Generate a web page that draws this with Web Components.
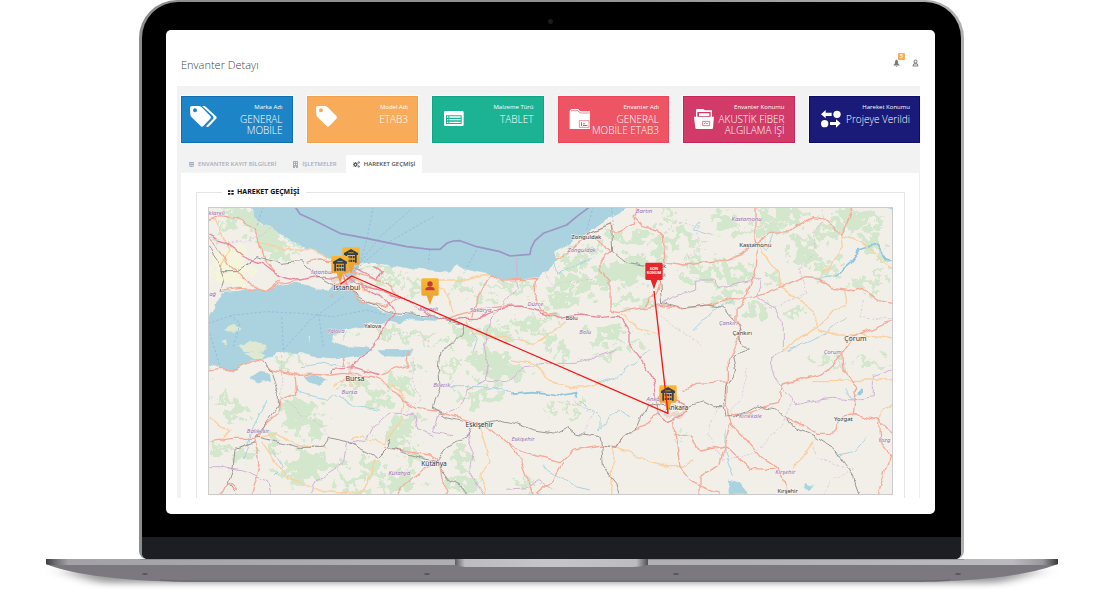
<!DOCTYPE html>
<html lang="tr">
<head>
<meta charset="utf-8">
<meta name="viewport" content="width=device-width, initial-scale=1">
<title>Envanter Detayı</title>
<style>
  body { margin: 0; background: #fff; font-family: "Open Sans", "Noto Sans", sans-serif; }
</style>
</head>
<body>
<laptop-frame>
  <app-header heading="Envanter Detayı" count="5"></app-header>
  <app-body>
    <stat-card slot="cards" color="#1d84c7" edge="#0f6fb4" icon="tags" label="Marka Adı">GENERAL<br>MOBİLE</stat-card>
    <stat-card slot="cards" color="#f8ac59" edge="#f3a14a" icon="tag" label="Model Adı">ETAB3</stat-card>
    <stat-card slot="cards" color="#1cb394" edge="#0ea583" icon="list" label="Malzeme Türü">TABLET</stat-card>
    <stat-card slot="cards" color="#ed5565" edge="#ee4358" icon="folder" label="Envanter Adı">GENERAL<br>MOBİLE ETAB3</stat-card>
    <stat-card slot="cards" color="#d23a68" edge="#cb2257" icon="open" label="Envanter Konumu">AKUSTİK FİBER<br>ALGILAMA İŞİ</stat-card>
    <stat-card slot="cards" color="#1a1a78" edge="#0c0c68" icon="move" label="Hareket Konumu">Projeye Verildi</stat-card>
    <tab-strip slot="tabs"></tab-strip>
    <history-panel slot="panel"><route-map></route-map></history-panel>
  </app-body>
</laptop-frame>

<script>
const define = (name, render) => customElements.define(name, class extends HTMLElement {
  connectedCallback() {
    if (!this.shadowRoot) this.attachShadow({ mode: "open" }).innerHTML = render(this);
  }
});

/* ---------- laptop ---------- */
define("laptop-frame", () => `
<style>
  :host { display: block; }
  .lid { margin: 0 136px 0 139px; box-sizing: border-box; padding: 2px 3px 0; border-radius: 38px 38px 8px 8px;
    background: linear-gradient(90deg, #8b8e8e, #8f9090 50%, #b0b0b1); }
  .glass { background: #000; border-radius: 36px 36px 6px 6px; padding-top: 28px; position: relative; overflow: hidden; }
  .camera { position: absolute; top: 17px; left: 50%; width: 5px; height: 5px; margin-left: -4px; border-radius: 50%; background: #1b1b1d; }
  .screen { margin: 0 26px 0 24px; background: #fff; border-radius: 5px; padding-bottom: 16px; overflow: hidden; }
  .chin { margin-top: 23px; height: 22px; background: #1d1e23; }
  .base { display: block; width: 100%; height: 35px; }
</style>
<div class="lid"><div class="glass">
  <div class="camera"></div>
  <div class="screen"><slot></slot></div>
  <div class="chin"></div>
</div></div>
<svg class="base" viewBox="0 559 1100 35" preserveAspectRatio="none" aria-hidden="true">
  <defs>
    <linearGradient id="rim"><stop offset="0" stop-color="#3f3f41"/><stop offset=".008" stop-color="#68686a"/><stop offset=".022" stop-color="#a2a1a5"/><stop offset=".3" stop-color="#adacb1"/><stop offset=".7" stop-color="#b2b1b6"/><stop offset=".955" stop-color="#bbbabf"/><stop offset=".985" stop-color="#98979b"/><stop offset="1" stop-color="#39393b"/></linearGradient>
    <linearGradient id="lip"><stop offset="0" stop-color="#5c5c60"/><stop offset=".05" stop-color="#bcbbc0"/><stop offset=".5" stop-color="#c6c5ca"/><stop offset=".94" stop-color="#bcbbc0"/><stop offset="1" stop-color="#505054"/></linearGradient>
    <filter id="soft" x="-5%" y="-100%" width="110%" height="300%"><feGaussianBlur stdDeviation="10 3"/></filter>
  </defs>
  <path d="M60 570H1044L1000 583H100Z" fill="#777" opacity=".75" filter="url(#soft)"/>
  <path d="M46 564H1058C1040 571 1000 581 920 582H190C110 581 64 572 46 564Z" fill="#7b7880"/>
  <path d="M160 580Q175 581 190 581H920Q935 581 950 580" fill="none" stroke="#68666c" stroke-width="1"/>
  <path d="M46 559H1058V564Q1056 565 1052 565H52Q47 565 46 564Z" fill="url(#rim)"/>
  <path d="M140 559H964" stroke="#77777b" stroke-width="1"/>
  <path d="M455 559H648V565Q640 567 632 567H471Q460 567 455 565Z" fill="url(#lip)"/>
  <g fill="#55545a"><ellipse cx="145" cy="574" rx="3" ry="1"/><ellipse cx="427" cy="574" rx="3" ry="1"/><ellipse cx="676" cy="574" rx="3" ry="1"/><ellipse cx="958" cy="574" rx="3" ry="1"/></g>
</svg>`);

/* ---------- header ---------- */
define("app-header", el => `
<style>
  :host { display: flex; justify-content: space-between; align-items: center; box-sizing: border-box; height: 56px; padding: 13px 16px 0 15px; color: #676a6c; }
  h1 { margin: 0; font-size: 11px; line-height: 16px; font-weight: 300; color: #444; }
  nav { display: flex; gap: 12px; align-items: center; }
  button { all: unset; position: relative; display: block; width: 7px; height: 8px; cursor: pointer; }
  svg { display: block; width: 7px; height: 8px; }
  button > svg { position: absolute; inset: -2px 0 auto 0; }
  .badge { position: absolute; left: 4px; top: -10px; width: 7px; height: 8px; border-radius: 1px; background: #f8ac59; color: #fff; font: 700 5px/8px "Open Sans", sans-serif; text-align: center; }
  nav { padding-top: 0; }
  .badge { top: -6px; height: 7px; line-height: 7px; left: 5px; }
  button > svg { top: 0; }
  nav { margin-top: -4px; }
</style>
<h1>${el.getAttribute("heading")}</h1>
<nav>
  <button aria-label="Bildirimler"><svg viewBox="0 0 14 16" fill="#767a7d"><path d="M7 1Q10 2 10 6Q10 11 13 12V13H1V12Q4 11 4 6Q4 2 7 1ZM5 14H9Q7 17 5 14Z"/></svg><span class="badge">${el.getAttribute("count")}</span></button>
  <button aria-label="Kullanıcı"><svg viewBox="0 0 14 16" fill="#84878a"><path fill-rule="evenodd" d="M7 1Q11 1 11 5Q11 8 9 8Q13 9 13 15H1Q1 9 5 8Q3 8 3 5Q3 1 7 1ZM7 3Q5 3 5 5Q6 7 7 7Q9 7 9 5Q9 3 7 3ZM4 11V13H10V11Z"/></svg></button>
</nav>`);

define("app-body", () => `
<style>
  :host { display: block; margin: 0 15px 0 11px; padding: 10px 0 0 4px; background: #f2f2f2; }
  .cards { display: grid; grid-template-columns: repeat(6, minmax(0, 1fr)); gap: 14px; margin-bottom: 12px; }
</style>
<div class="cards"><slot name="cards"></slot></div>
<slot name="tabs"></slot>
<slot name="panel"></slot>`);

/* ---------- cards ---------- */
const cardIcons = {
  tags: `<path fill-rule="evenodd" d="M0 12Q0 6 6 6H25Q31 6 35 10L61 36Q65 40 61 44L40 66Q36 70 32 66L5 40Q2 37 1 32ZM15 13A6 6 0 1 0 15 25A6 6 0 1 0 15 13Z"/><path d="M36 6H40Q45 6 49 10L77 36Q83 41 77 46L57 67Q53 71 48 67L69 45Q73 40 68 35Z"/>`,
  tag: `<path fill-rule="evenodd" d="M0 12Q0 6 6 6H25Q31 6 35 10L61 36Q65 40 61 44L40 66Q36 70 32 66L5 40Q2 37 1 32ZM15 13A6 6 0 1 0 15 25A6 6 0 1 0 15 13Z"/>`,
  list: `<path fill-rule="evenodd" d="M13 21H64Q68 21 68 25V62Q68 66 64 66H13Q9 66 9 62V25Q9 21 13 21ZM15 34V60H62V34Z"/><path d="M18 37h4v4h-4zM25 37h34v4H25zM18 45h4v4h-4zM25 45h34v4H25zM18 53h4v4h-4zM25 53h34v4H25z"/>`,
  folder: `<path d="M8 20L14 15H34L40 22H69V75H8Z"/><path d="M12 20H33L39 27H69" fill="none" stroke="#ed5565" stroke-width="2"/><path d="M37 50H66V70H37Z" fill="none" stroke="#ed5565" stroke-width="2"/><path d="M42 55h3v11h-3zM48 58h6v3h-6zM48 63h13v3H48z" fill="#ed5565"/>`,
  open: `<path fill-rule="evenodd" d="M14 15H34L39 19H60V38H66L63 72Q63 75 59 75H14Q10 75 10 72L6 38H12V19ZM16 24V38H56V24Z"/><path d="M21 28H52V36H21Z"/><path d="M32 52H53V65H32ZM36 60L41 56 45 60 49 57" fill="none" stroke="#d23a68" stroke-width="2"/>`,
  move: `<path d="M9 31L23 18V26H41V36H23V43ZM68 58L54 46V54H36V63H54V71Z"/><circle cx="57" cy="31" r="11"/><circle cx="20" cy="59" r="11"/>`
};
define("stat-card", el => `
<style>
  :host { display: flex; box-sizing: border-box; min-width: 0; height: 47px; padding: 6px 9px 0 8px; border: 1px solid ${el.getAttribute("edge")}; background: ${el.getAttribute("color")}; box-shadow: 0 0 0 1px #fafafa; color: #fff; }
  svg { flex: none; width: 28px; height: 28px; margin: 1px -10px 0 0; fill: #fff; }
  div { flex: 1; text-align: right; white-space: nowrap; }
  small { display: block; font-size: 6px; line-height: 9px; font-weight: 500; margin-bottom: 2px; }
  strong { display: block; font-size: 10px; line-height: 11px; font-weight: 300; }
</style>
<svg viewBox="0 0 84 84" aria-hidden="true">${cardIcons[el.getAttribute("icon")]}</svg>
<div><small>${el.getAttribute("label")}</small><strong><slot></slot></strong></div>`);

/* ---------- tabs ---------- */
define("tab-strip", () => `
<style>
  :host { display: flex; gap: 2px; height: 18px; }
  button { all: unset; box-sizing: border-box; display: flex; align-items: center; gap: 3px; padding: 0 7px; font-size: 6px; line-height: 10px; font-weight: 600; color: #a3aec0; white-space: nowrap; cursor: pointer; }
  button[aria-selected="true"] { gap: 4px; background: #fff; color: #4c4f55; border-radius: 1px 1px 0 0; }
  svg { width: 7px; height: 7px; fill: currentColor; }
</style>
<button role="tab" aria-selected="false"><svg viewBox="0 0 14 14"><path d="M2 2H12V5H2ZM2 6H12V8H2ZM2 9H12V11H9V12H5V11H2Z"/></svg>ENVANTER KAYIT BİLGİLERİ</button>
<button role="tab" aria-selected="false"><svg viewBox="0 0 14 14"><path fill-rule="evenodd" d="M2 0H12V14H8V11H6V14H2ZM4 2V4H6V2ZM8 2V4H10V2ZM4 6V8H6V6ZM8 6V8H10V6Z"/></svg>İŞLETMELER</button>
<button role="tab" aria-selected="true"><svg viewBox="0 0 14 14"><g fill="none" stroke="currentColor"><circle cx="5" cy="7" r="3" stroke-width="2.5"/><circle cx="11.500" cy="3" r="1.500" stroke-width="1.500"/><circle cx="11.500" cy="11" r="1.500" stroke-width="1.500"/><path d="M5 2V4M5 10V12M0 7H2M1 3L3 5M1 11L3 9" stroke-width="1.500"/></g></svg>HAREKET GEÇMİŞİ</button>`);

define("history-panel", () => `
<style>
  :host { display: block; background: #fff; padding: 14px 14px 0; border: solid #eee; border-width: 0 1px 0 0; }
  fieldset { min-width: 0; margin: 0 0 0 1px; padding: 10px 11px 3px; border: 1px solid #e5e5e5; border-bottom: 0; }
  legend { display: flex; align-items: center; gap: 3px; margin-left: 14px; padding: 0 6px; font-size: 7px; line-height: 10px; font-weight: 700; color: #111; font-family: "Noto Sans", "Open Sans", sans-serif; }
  svg { width: 6px; height: 5px; }
</style>
<fieldset>
  <legend><svg viewBox="0 0 18 15" aria-hidden="true"><path d="M0 1H7V6H0ZM10 1H17V6H10ZM0 9H7V14H0ZM10 9H17V14H10Z" fill="#111"/></svg>HAREKET GEÇMİŞİ</legend>
  <slot></slot>
</fieldset>`);

/* ---------- map ---------- */
const woods = [
  [130,45,50,28],[180,72,52,26],[215,125,40,44],[250,165,38,20],[95,70,40,10],[50,100,14,10],[520,205,60,12],[560,240,36,10],[605,215,26,8],[640,262,40,10],[440,412,40,10],[600,400,60,12],[680,412,44,16],[300,135,22,10],
  [790,265,26,18],[840,300,40,16],[890,252,50,8],[960,268,50,12],[1130,250,88,26],[1110,180,50,22],[1190,140,30,16],[1290,110,64,20],[1250,220,70,36],[1320,200,46,36],[1290,300,54,16],[1090,300,60,16],[890,395,40,20],[790,405,44,20],[980,370,60,16],[1020,412,46,16],[1040,345,36,9],[1220,410,54,18],[1310,420,28,12],[1380,160,26,26],
  [1440,110,58,20],[1410,55,28,14],[1570,60,40,20],[1620,95,28,14],[1750,45,78,24],[1710,90,60,20],[1810,150,50,34],[1890,90,40,20],[1980,60,58,28],[1940,40,34,14],[2020,130,38,38],[1880,205,50,24],[1530,220,78,22],[1620,220,40,20],[1580,290,50,14],[1490,180,40,14],[1670,320,30,20],[1780,335,30,14],[1990,250,50,12],[2050,220,28,14],[1720,240,18,18],
  [275,480,46,12],[290,640,56,46],[340,680,36,38],[340,790,80,32],[290,820,50,24],[480,560,50,18],[590,550,50,24],[540,590,40,18],[590,710,50,28],[620,670,40,18],[520,800,40,28],[600,850,58,24],[450,850,50,18],[640,780,32,28],[60,600,26,16],[110,630,24,34],[50,750,28,12],[130,770,36,18],[225,735,22,26],[60,510,20,8],[650,510,26,12],
  [750,500,36,10],[870,490,58,38],[920,520,48,26],[860,600,48,24],[800,580,28,14],[1110,630,32,12],[1050,628,20,10],[970,510,38,12],[780,770,24,38],[790,850,46,28],[1090,465,28,12],[1220,460,32,12],[970,850,32,10],
  [1870,480,34,12],[2020,490,54,12],[1920,500,20,8],[1448,704,10,4]
].map(([x, y, a, b]) => `<ellipse cx="${x}" cy="${y}" rx="${a}" ry="${b}"/>`).join("");

const roads = ["25 120 60 150 90 200 140 240 190 275 240 240","60 275 120 265 195 272 240 250 300 240","25 60 60 50 120 60 160 85 180 130 195 180 235 225",
  "815 350 835 290 850 260 870 225 910 240 980 238 1010 235 1005 290 1025 330 1070 345","740 355 790 340 860 325 940 315",
  "1065 175 1100 160 1130 130 1160 105 1200 130 1235 155 1200 190 1200 205 1230 240 1230 330 1265 335","1160 105 1230 75 1245 100 1300 70 1300 50 1315 20","1300 50 1330 80 1370 90 1390 110 1395 190 1365 280 1330 320",
  "1395 185 1450 195 1560 185 1620 165 1670 130 1710 100 1760 98 1800 75 1840 50 1880 55 1910 90 1925 100 1945 60 1960 20","1665 20 1665 120 1670 140 1665 210 1650 250 1635 295",
  "1265 335 1380 315 1440 328 1520 315 1590 295 1640 298 1700 280 1760 255 1820 230 1860 235 1900 268 1950 275 1990 265 2040 300 2078 308",
  "1640 298 1605 330 1605 360 1625 400 1600 455 1585 480 1585 560 1580 640 1590 670 1575 740 1560 790 1500 830 1500 884",
  "1450 570 1490 550 1585 545","1590 645 1640 640 1700 620 1735 610 1750 555 1800 540 1870 520 1920 470 1930 450","2078 360 2000 395 1960 410 1925 460 1930 510 1970 560 1960 640 2030 660 2078 700",
  "1760 655 1850 700 1890 700 1930 650 1970 640","2035 660 2040 720 2070 765 2050 830 2035 884","1590 670 1640 720 1680 770 1730 800 1750 830 1760 884","1575 735 1650 805 1730 810",
  "1420 660 1425 700 1440 800 1480 850 1560 880","1420 700 1470 710 1500 750 1575 735",
  "1375 640 1340 670 1300 690 1270 710 1250 740 1200 735 1120 750 1090 780 1080 785 1000 765 935 738 870 685 830 665 740 640 700 630","935 738 960 780 1000 884","1090 785 1060 840 1010 884",
  "25 510 60 505 110 510 150 490 180 478 210 510 240 515 285 522 390 525 430 520 520 530 545 540 580 570 615 605 650 625 720 635","285 522 290 580 240 600 235 640 190 680 165 715 100 715 25 725","165 720 175 760 180 800 155 884",
  "550 745 620 755 690 765 710 780 640 830 590 884","720 790 740 884","435 500 430 470","545 525 600 505 620 500 625 450","400 255 430 250 480 300 560 320 600 290 560 250 500 230 450 215","320 190 350 180 400 182","55 884 90 850 110 870"];
const minor = ["165 715 230 700 290 740 380 745","450 720 490 705 550 735 600 660 615 600 580 550","185 725 230 790 260 830 350 870 480 880 510 830 525 780","835 670 860 740 870 790 845 820 855 884","930 480 1000 490 1050 540 1130 565 1200 550","1250 740 1340 780 1400 800 1450 800 1480 780","1240 740 1235 884",
  "1670 130 1710 190 1735 220 1735 260 1800 300 1840 340 1860 390 1910 405 1990 405 2078 420","1925 100 1930 140 1900 180 1860 230","1925 105 1990 125 2030 170 2078 205","1860 380 1800 410 1750 450","1840 545 1900 545 2000 540 2078 540","1850 710 1820 760 1780 800","2078 605 2050 625 2035 660",
  "800 360 820 400 900 410 1000 430 1060 390 1100 360","1265 340 1310 380 1370 400","690 240 740 240 800 240 860 225","760 340 735 270 690 240","1930 270 1940 320 1900 330 1860 380","25 650 60 680 90 690 60 720","45 50 70 110 90 150 60 200","180 130 260 150 330 145 380 175","400 560 440 530 480 560","430 240 470 230 490 270 520 260"];
const rails = ["25 140 60 190 60 215 110 215 170 170 240 190 300 185 340 220 390 250 440 265 500 300 560 335 620 342 700 345 745 360 790 370 790 400 760 430 720 450 715 500 720 560 705 600 700 625 740 650 830 670 900 660 960 675 1000 690 1070 700 1105 680 1130 700 1200 710 1205 735 1250 742 1270 710 1310 680 1340 610 1400 620 1465 620 1510 605 1540 620 1570 620 1575 650 1600 650 1640 635 1670 618 1730 630 1760 660 1800 690 1845 710 1900 745 1930 790 1960 830 1980 884",
  "60 215 70 240 60 275","1205 735 1210 800 1250 850 1260 884","1160 105 1235 73 1238 155 1280 190 1340 200 1380 250 1385 310 1440 325 1520 315 1570 322 1590 350 1620 380 1625 430 1645 450 1600 465 1610 510 1580 560 1575 620",
  "180 478 215 520 235 580 235 620 190 680 165 710 230 725 290 745 370 745 385 712 440 725 520 765 530 775 565 740 565 720","165 725 105 745 100 800 85 850 110 884","565 745 690 780 710 785 750 840 790 860 800 884","700 790 740 740 800 710 810 680"];
const borders = ["945 170 950 240 955 265 930 290 900 330 870 360 850 440 860 500 860 540 800 570 780 620 720 640 700 700 760 710","1380 315 1420 290 1490 270 1490 240 1540 240 1560 265 1610 250 1685 235 1670 290 1720 320 1750 370 1750 450 1715 470 1715 510 1740 560 1790 615 1850 600 1900 595 1960 600 2020 590 2020 530 2078 510",
  "25 800 70 800 130 810 200 840 215 884","330 884 355 840 430 790 440 730 500 720 520 680 570 640 640 640 650 690 700 710","800 700 820 760 810 820 850 884","860 540 920 545 970 500 1060 490 1130 490 1250 450","925 865 980 860 1020 845 1060 870"];
const dashes = ["1440 70 1490 80 1500 140 1450 190","1860 20 1870 60 1840 100 1850 150 1800 200 1820 280 1700 330","1990 300 1980 350 2078 360","1380 345 1450 400 1500 430","1560 620 1520 700 1570 780 1660 760 1740 680 1780 600","245 470 245 600 300 640 375 680 385 710","1840 730 1850 770 1920 800 1960 810","1005 165 1040 230 1060 255 1140 245 1190 230","640 470 640 540 660 600 620 630","25 115 90 130 180 110 240 60 285 20","1870 884 1890 840 1960 810","1200 710 1150 700 1180 640 1120 600","560 410 620 395 690 430","1640 500 1620 600 1590 640"];
const ferries = ["520 20 500 120 480 190","460 215 540 110 620 40 640 20","460 215 560 130 700 50","25 370 100 345 200 335 300 340 400 350 500 330 560 345","370 440 355 340","250 450 245 350","100 440 120 370 90 345","430 290 330 360 250 450","690 148 685 190","1235 20 1240 75","830 150 790 220","1180 20 1160 90","190 20 170 80","30 400 60 500"];
const rivers = ["285 560 330 590 380 600 400 580 470 620 540 630","200 600 160 680 130 780","220 750 250 800 220 830","750 560 860 560 930 575","1030 800 1080 830 1120 860 1170 870","1130 590 1160 620 1200 650 1200 690 1250 630 1290 650","1820 230 1860 232 1910 225","1760 450 1830 420 1880 400 1940 350","1575 690 1575 760 1600 830","1910 765 1960 755 2000 710","1480 390 1540 330 1600 300","1720 100 1700 150 1680 130","800 370 830 420 820 450","1050 170 1080 220 1180 170","1190 550 1250 530 1350 450","300 500 380 490 440 500","1980 570 1960 600 1940 570","1500 60 1480 90 1540 110"];
const motorways = ["25 105 80 130 130 165 190 190 235 225 300 240 350 230 400 235 430 215 470 250 520 280 560 300 585 335 560 370 520 440 480 470 455 510","470 250 540 270 620 300 690 345 740 360 800 355 840 355 920 320 960 318 1020 335 1080 355 1140 345 1200 352 1260 348 1270 370 1290 400 1290 430 1320 470 1350 520 1365 560 1370 600","1370 600 1400 585 1450 610 1465 625 1440 650 1400 665 1375 640 1370 600","390 520 400 508 470 503 540 525","440 270 430 220 465 205 530 240 550 215 520 200"];
const lines = list => list.map(p => `<polyline points="${p}"/>`).join("");
const text = (x, y, size, s) => `<text x="${x}" y="${y}" font-size="${size}">${s}</text>`;
const regions = [[50,46,"klareli"],[366,222,"İstanbul"],[408,400,"Yalova"],[686,332,"Kocaeli"],[842,337,"Sakarya"],[1006,318,"Düzce"],[1145,157,"Zonguldak"],[1156,403,"Bolu"],[1332,39,"Bartın"],[1640,63,"Kastamonu"],[1585,374,"Çankırı"],[1898,461,"Çorum"],[448,581,"Bursa"],[174,698,"Balıkesir"],[598,825,"Kütahya"],[725,562,"Bilecik"],[969,722,"Eskişehir"],[1368,603,"Ankara"],[1651,653,"Kırıkkale"],[1756,822,"Kırşehir"],[2053,726,"Yozg"],[38,287,"ağ"],[1388,230,"ük"]];
const cities = [[440,269,21,"İstanbul"],[518,385,17,"Yalova"],[1159,116,18,"Zonguldak"],[1115,360,17,"Bolu"],[1666,141,18,"Kastamonu"],[1627,406,18,"Çankırı"],[1966,424,21,"Çorum"],[465,543,21,"Bursa"],[702,797,20,"Kütahya"],[838,681,20,"Eskişehir"],[1432,630,20,"Ankara"],[1930,663,18,"Yozgat"],[1763,880,17,"Kırşehir"],[1388,203,17,"ük"]];
const pin = (x, y, fill, art) => `<g transform="translate(${x} ${y})"><path d="M-22-80H22Q26-80 26-76V-32Q26-28 22-28H10L0 0L-10-28H-22Q-26-28-26-32V-76Q-26-80-22-80Z" fill="${fill}"/>${art}</g>`;
const depot = `<path fill-rule="evenodd" d="M-21-63L0-75L21-63V-57H17V-34H-17V-57H-21ZM-12-57V-34H12V-57Z" fill="#34404c"/><path d="M-10-54H-4V-47H-10ZM-2-54H4V-47H-2ZM6-54H11V-47H6ZM-10-43H-4V-36H-10ZM-2-43H4V-36H-2ZM6-43H11V-36H6Z" fill="#34404c"/><path d="M-8-65H8V-62H-8Z" fill="#c98f35"/>`;
const person = `<circle cx="0" cy="-63" r="8" fill="#c43a3a"/><path d="M-14-44Q-14-54-5-54H5Q14-54 14-44Z" fill="#c43a3a"/>`;
const last = `<g fill="#fff" font-weight="700" text-anchor="middle"><text y="-57" font-size="12">SON</text><text y="-45" font-size="11">KONUM</text></g>`;

define("route-map", () => `
<style>
  :host { display: block; }
  svg { display: block; box-sizing: border-box; width: 100%; height: auto; border: 1px solid #ccc; background: #f2efe9; font-family: "Noto Sans", "Open Sans", sans-serif; }
</style>
<svg viewBox="27 24 2049 859" role="img" aria-label="Hareket haritası">
  <defs>
    <filter id="ragged" x="0" y="0" width="2100" height="900" filterUnits="userSpaceOnUse" color-interpolation-filters="sRGB"><feTurbulence type="fractalNoise" baseFrequency=".03" numOctaves="4" seed="7"/><feDisplacementMap in="SourceGraphic" scale="120" xChannelSelector="R" yChannelSelector="G"/></filter>
    <filter id="wiggle" x="0" y="0" width="2100" height="900" filterUnits="userSpaceOnUse" color-interpolation-filters="sRGB"><feTurbulence type="fractalNoise" baseFrequency=".025" numOctaves="2" seed="3"/><feDisplacementMap in="SourceGraphic" scale="22" xChannelSelector="R" yChannelSelector="G"/></filter>
    <linearGradient id="amber" x2="0" y2="1"><stop stop-color="#f8b832"/><stop offset="1" stop-color="#e89b35"/></linearGradient>
  </defs>
  <ellipse cx="90" cy="200" rx="65" ry="60" fill="#f5f5dc" filter="url(#ragged)"/>
  <g fill="#d3e7cc" filter="url(#ragged)">${woods}</g>
  <g filter="url(#wiggle)">
    <g fill="#aad3df">
      <path d="M130 0L175 55 215 85 250 110 300 135 350 155 390 175 425 195 453 250 462 250 480 190 520 188 600 200 640 208 720 217 750 210 775 193 800 208 870 225 910 237 960 238 1010 232 1045 215 1068 180 1060 160 1090 145 1120 120 1170 95 1220 60 1260 40 1290 0Z"/>
      <path d="M0 365L25 352 45 320 60 285 75 275 120 272 150 265 195 272 240 255 280 248 320 255 350 270 385 275 400 258 420 262 445 270 470 285 500 305 530 325 560 338 600 345 640 345 730 350 700 362 640 358 600 370 570 362 545 372 500 370 470 385 440 392 400 405 395 422 430 438 500 442 515 452 480 466 440 472 400 475 340 470 300 460 260 457 230 463 205 470 180 478 155 484 130 500 100 515 60 505 0 480Z"/>
      <path d="M535 448L640 446 630 465 590 470 555 468ZM155 532L180 516 207 520 210 545 180 550ZM312 528L345 525 377 543 355 558 330 545ZM1585 838L1620 850 1645 884H1582ZM1815 846L1840 855 1830 870 1812 862ZM2040 20H2078V32Z"/>
    </g>
    <g fill="#dfe8d0"><path d="M75 390L100 375 128 385 100 402ZM115 435L145 425 200 438 185 458 130 452ZM60 430L75 420 78 440ZM325 410L332 405 333 425ZM130 458L165 455 200 462 178 478 160 474Z"/></g>
    <g fill="none" stroke-linejoin="round">
      <g stroke="#aad3df" stroke-width="3">${lines(rivers)}</g>
      <path d="M1910 225L1950 190 1980 150 2030 135 2060 180 2078 185M930 580L1000 575 1080 585 1130 575 1125 590M1980 560V580" stroke="#8fc4de" stroke-width="5"/>
      <g stroke="#d0b2d6" stroke-width="3">${lines(borders)}</g>
      <g stroke="#d3b8d8" stroke-width="2" stroke-dasharray="7 5">${lines(dashes)}</g>
      <g stroke="#fad09f" stroke-width="4">${lines(minor)}</g>
      <g stroke="#f5aa98" stroke-width="4">${lines(roads)}</g>
      <g stroke="#e98ba0" stroke-width="4">${lines(motorways)}</g>
      <g stroke="#9b9794" stroke-width="3">${lines(rails)}</g>
    </g>
  </g>
  <g fill="none">
    <g stroke="#8eaed6" stroke-width="2" stroke-dasharray="7 6">${lines(ferries)}</g>
    <path d="M285 20L300 42 340 60 390 85 420 100 500 115 620 140 690 148 720 148 740 130 760 123 780 122 830 140 900 155 930 168 990 163 993 145 1005 122 1030 100 1100 75 1130 50 1170 20" stroke="#9c94c6" stroke-width="5" stroke-linejoin="round"/>
  </g>
  <g fill="#e8a78f" opacity=".35" filter="url(#ragged)"><ellipse cx="440" cy="245" rx="34" ry="20"/><ellipse cx="455" cy="522" rx="30" ry="10"/><ellipse cx="1410" cy="625" rx="28" ry="22"/></g>
  <g fill="#9a70ab" font-style="italic" text-anchor="middle" stroke="#f7f4f2" stroke-width="2" paint-order="stroke">${regions.map(([x, y, s]) => text(x, y, 18, s)).join("")}</g>
  <g fill="#333" text-anchor="middle" stroke="#f7f4f2" stroke-width="3" paint-order="stroke">${cities.map(([x, y, z, s]) => text(x, y, z, s)).join("")}</g>
  ${pin(453, 222, "url(#amber)", depot)}
  ${pin(420, 248, "url(#amber)", depot)}
  ${pin(690, 315, "url(#amber)", person)}
  ${pin(1404, 636, "url(#amber)", depot)}
  ${pin(1362, 268, "#e6262b", last)}
  <path d="M421 253L455 228L1404 640L1362 273" fill="none" stroke="#fa1414" stroke-width="4" stroke-linejoin="round"/>
</svg>`);
</script>
</body>
</html>
